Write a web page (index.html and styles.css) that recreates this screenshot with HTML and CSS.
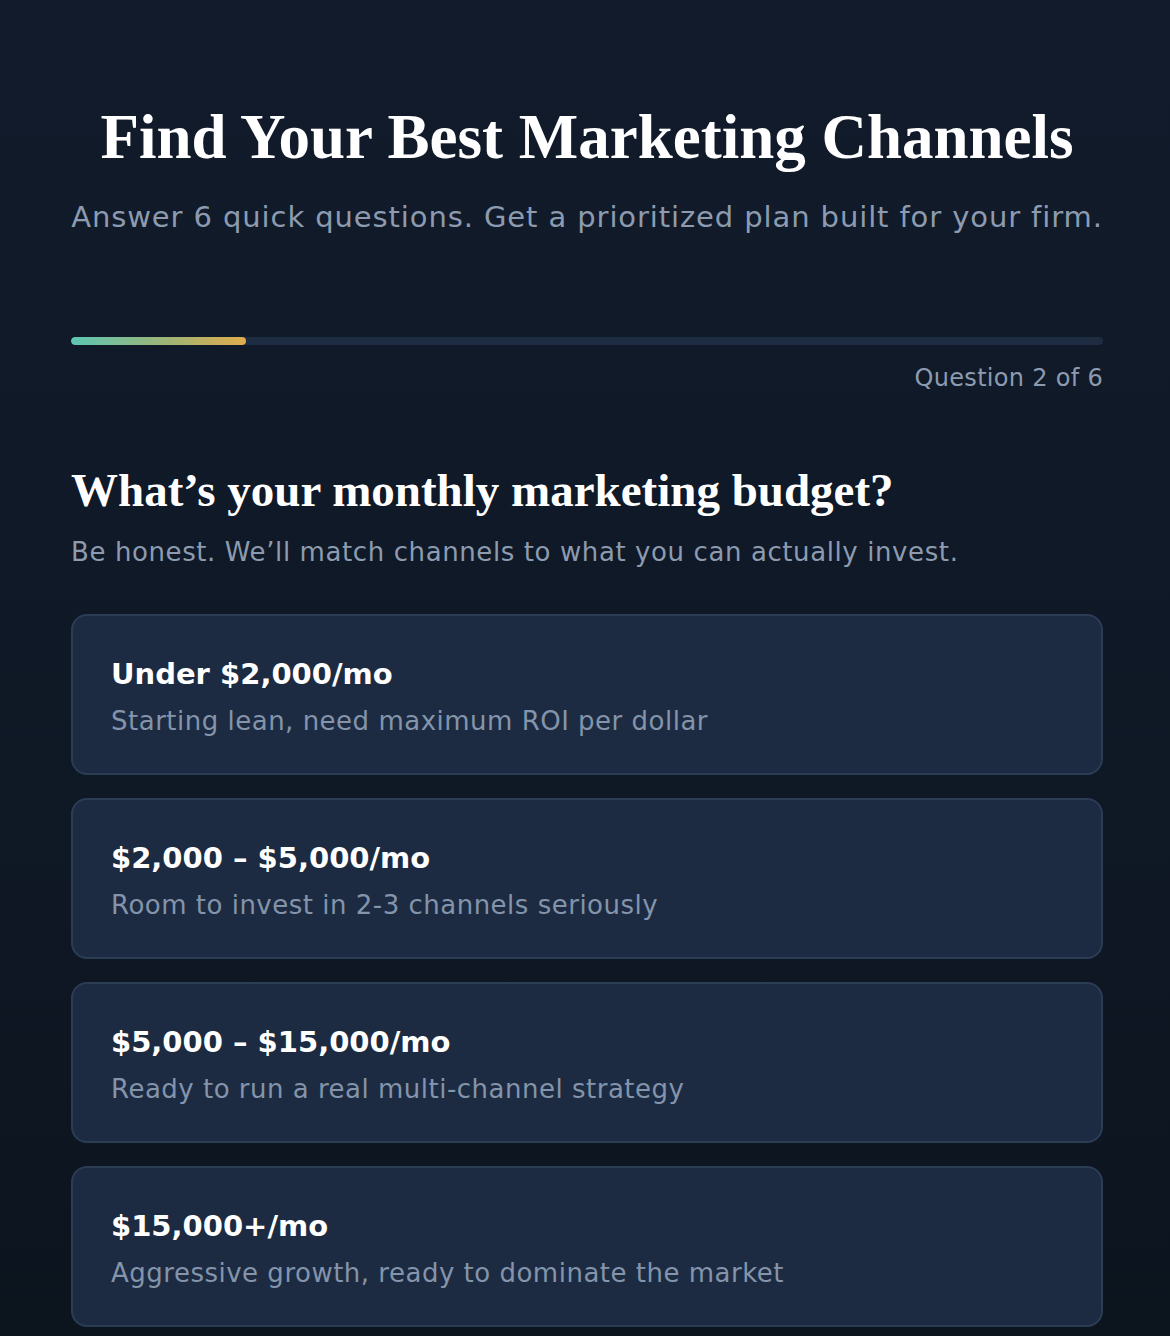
FILE: index.html
```html
<!DOCTYPE html>
<html lang="en">
<head>
<meta charset="utf-8">
<title>Find Your Best Marketing Channels</title>
<link rel="stylesheet" href="styles.css">
</head>
<body>
<main class="quiz">
  <header class="hero">
    <h1 class="hero-title">Find Your Best Marketing Channels</h1>
    <p class="hero-sub">Answer 6 quick questions. Get a prioritized plan built for your firm.</p>
  </header>
  <section class="progress">
    <div class="progress-track"><div class="progress-fill" style="width: 17%"></div></div>
    <div class="progress-label">Question 2 of 6</div>
  </section>
  <section class="question">
    <h2 class="question-title">What’s your monthly marketing budget?</h2>
    <p class="question-sub">Be honest. We’ll match channels to what you can actually invest.</p>
    <div class="options">
      <button class="option">
        <span class="option-title">Under $2,000/mo</span>
        <span class="option-desc">Starting lean, need maximum ROI per dollar</span>
      </button>
      <button class="option">
        <span class="option-title">$2,000 – $5,000/mo</span>
        <span class="option-desc">Room to invest in 2-3 channels seriously</span>
      </button>
      <button class="option">
        <span class="option-title">$5,000 – $15,000/mo</span>
        <span class="option-desc">Ready to run a real multi-channel strategy</span>
      </button>
      <button class="option">
        <span class="option-title">$15,000+/mo</span>
        <span class="option-desc">Aggressive growth, ready to dominate the market</span>
      </button>
    </div>
  </section>
</main>
</body>
</html>
```
FILE: styles.css
```css
html, body {
  margin: 0;
  padding: 0;
}
body {
  min-height: 1336px;
  background: linear-gradient(180deg, #111b2b 0%, #0f1825 60%, #0c141e 100%);
  font-family: "DejaVu Sans", "Open Sans", sans-serif;
  color: #ffffff;
}
.quiz {
  width: 1032px;
  margin: 0 0 0 71px;
  padding-top: 102px;
}
.hero {
  text-align: center;
}
.hero-title {
  margin: 0;
  font-family: "Liberation Serif", "DejaVu Serif", serif;
  font-weight: 700;
  font-size: 63px;
  line-height: 70px;
  color: #ffffff;
}
.hero-sub {
  margin: 25px 0 0;
  font-size: 29px;
  line-height: 40px;
  letter-spacing: 0.9px;
  color: #8d9bb0;
  white-space: nowrap;
}
.progress {
  margin-top: 100px;
}
.progress-track {
  height: 8px;
  border-radius: 4px;
  background: #1d2c40;
  overflow: hidden;
}
.progress-fill {
  height: 100%;
  border-radius: 4px;
  background: linear-gradient(90deg, #5dc6b3 0%, #9fb476 55%, #e1ad4c 100%);
}
.progress-label {
  margin-top: 16px;
  text-align: right;
  font-size: 24px;
  line-height: 34px;
  letter-spacing: 0.3px;
  color: #8d9bb0;
}
.question {
  margin-top: 68px;
}
.question-title {
  margin: 0;
  font-family: "Liberation Serif", "DejaVu Serif", serif;
  font-weight: 700;
  font-size: 47px;
  line-height: 54px;
  color: #ffffff;
}
.question-sub {
  margin: 17px 0 0;
  font-size: 26px;
  line-height: 36px;
  letter-spacing: 0.6px;
  color: #8d9bb0;
}
.options {
  margin-top: 44px;
  display: flex;
  flex-direction: column;
  gap: 23px;
}
.option {
  display: flex;
  flex-direction: column;
  align-items: flex-start;
  gap: 9px;
  height: 161px;
  box-sizing: border-box;
  padding: 38px 38px 0;
  background: #1c2b41;
  border: 2px solid #2b3c55;
  border-radius: 16px;
  font-family: inherit;
  text-align: left;
  cursor: pointer;
}
.option-title {
  font-size: 29px;
  line-height: 40px;
  font-weight: 700;
  color: #ffffff;
}
.option-desc {
  font-size: 26px;
  line-height: 36px;
  letter-spacing: 0.5px;
  color: #8394ab;
}
```
